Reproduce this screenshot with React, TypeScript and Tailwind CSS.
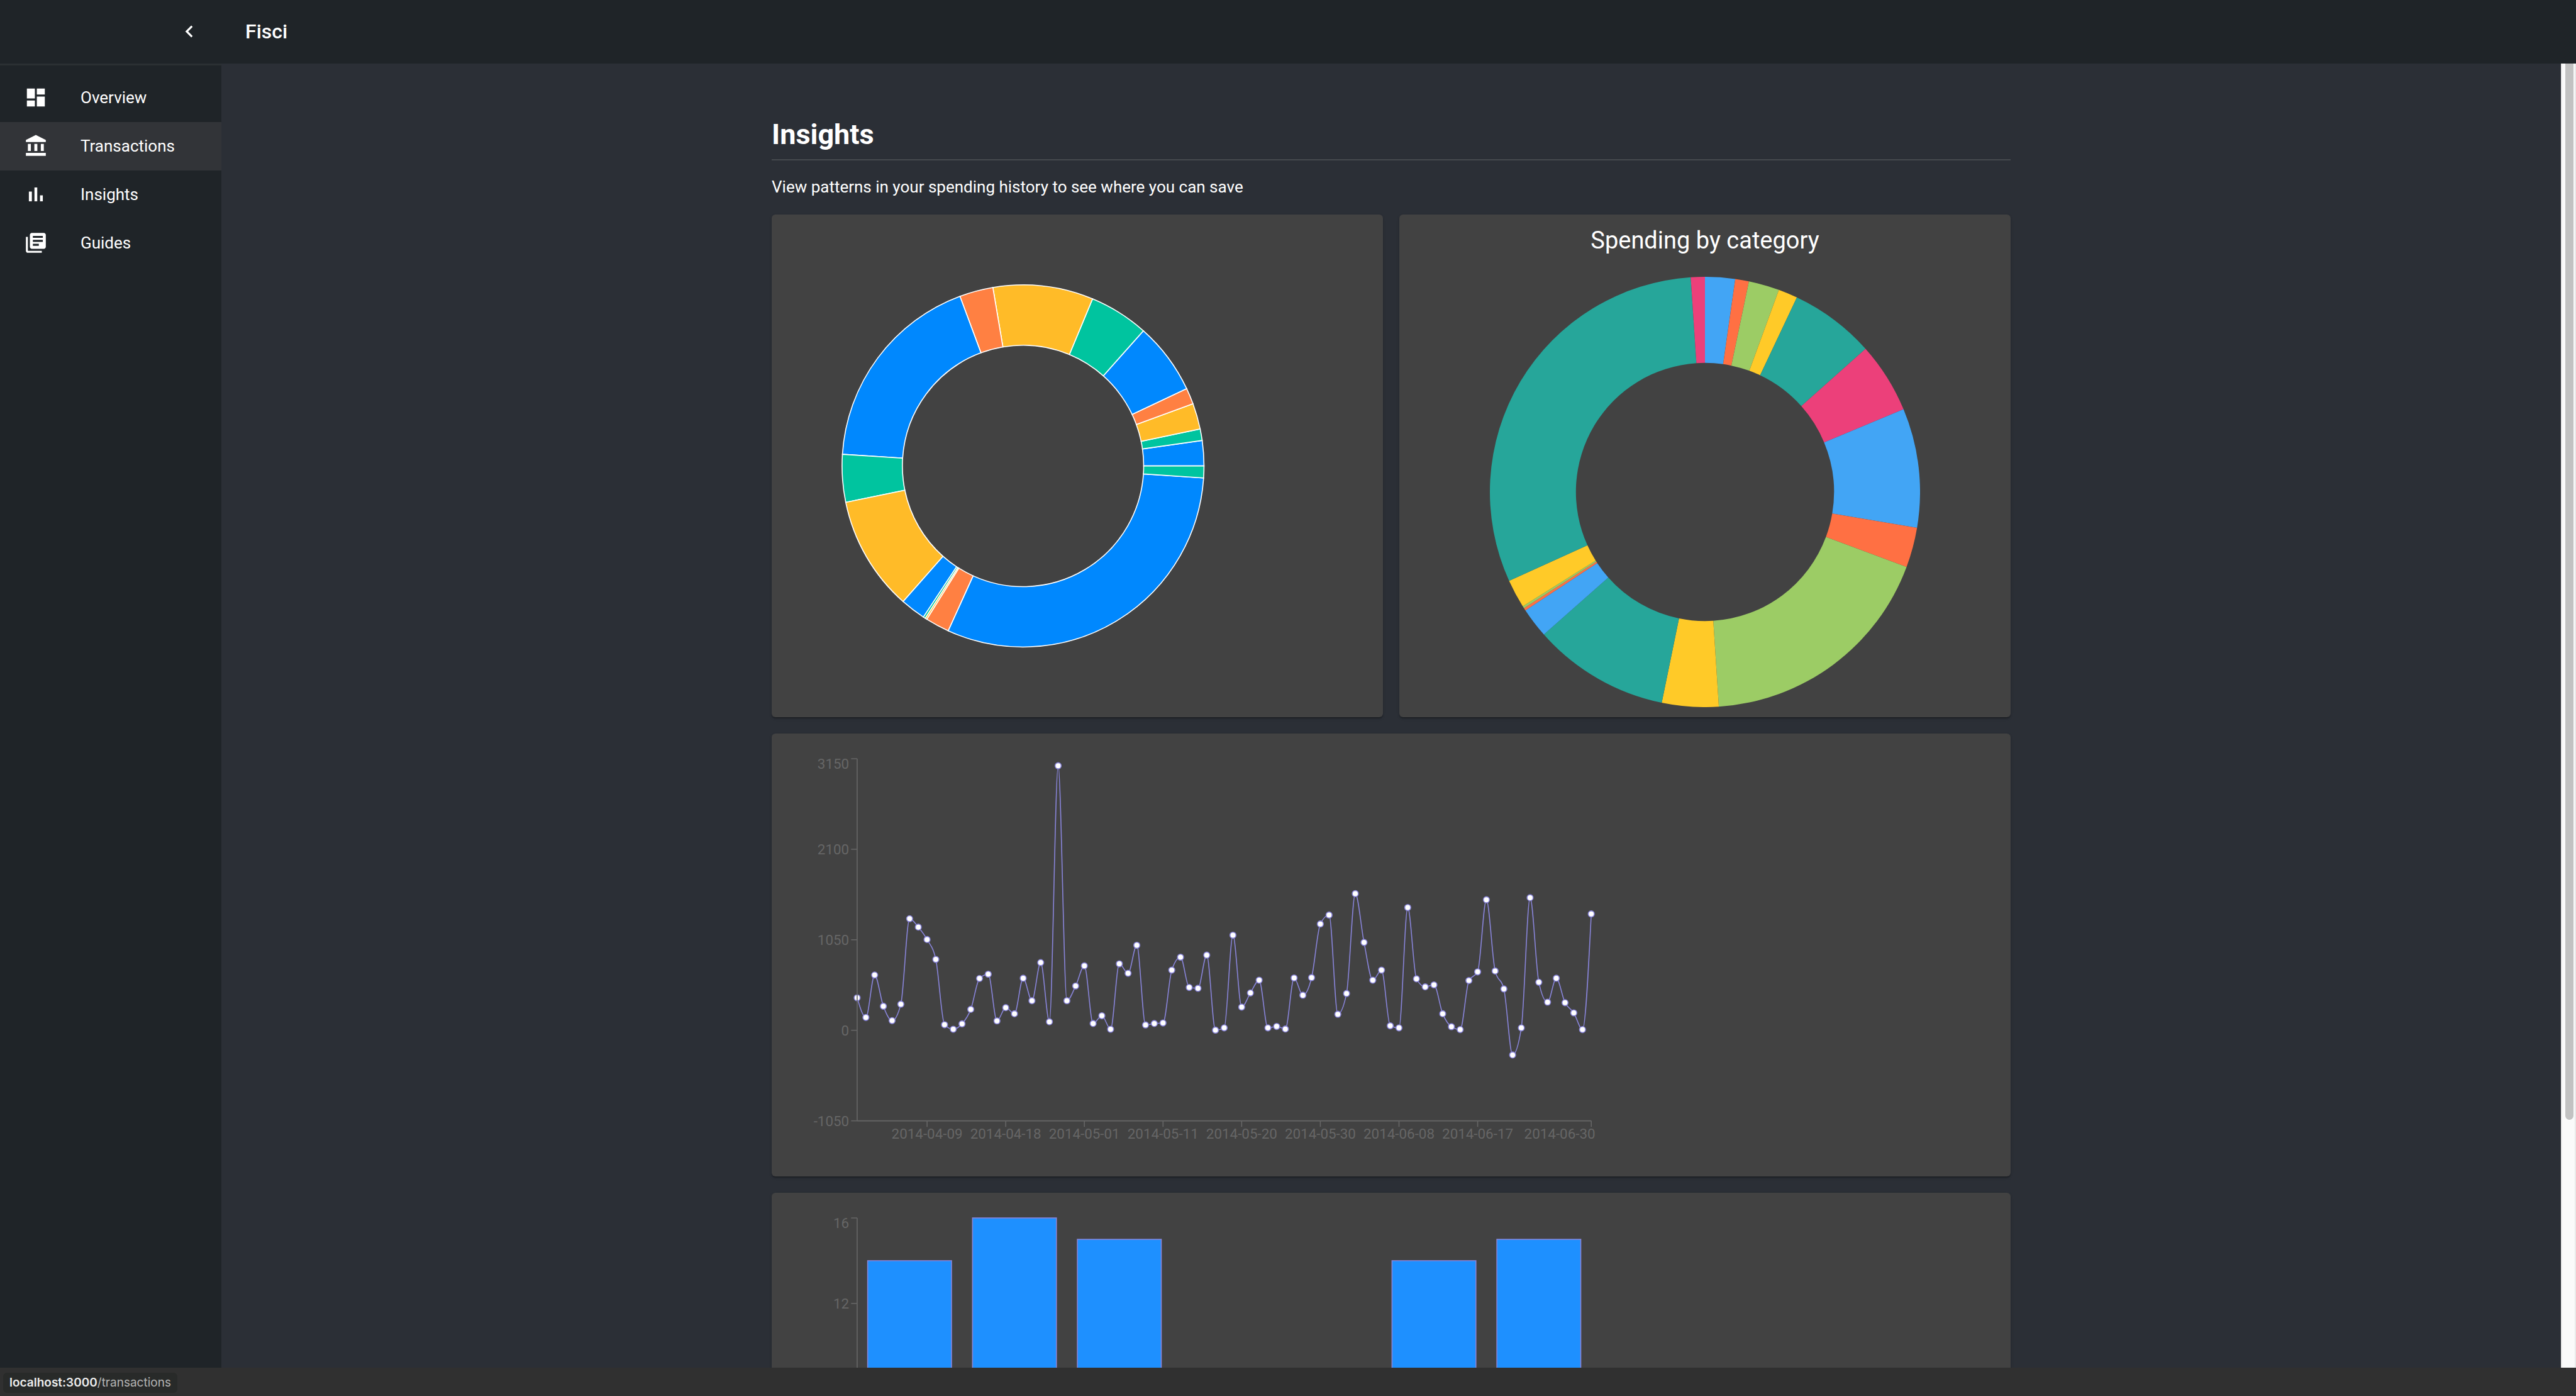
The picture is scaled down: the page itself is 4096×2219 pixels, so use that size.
import React from 'react';

interface Slice {
  to: number; // end of the slice, in degrees
  warm: string;
  soft: string;
}

// `warm` is used by the outlined donut, `soft` by the plain one
const slices: Slice[] = [
  { to: 8.1, warm: '#0088FE', soft: '#42A5F5' },
  { to: 11.8, warm: '#00C49F', soft: '#FF7043' },
  { to: 20.1, warm: '#FFBB28', soft: '#9CCC65' },
  { to: 25.3, warm: '#FF8042', soft: '#FFCA28' },
  { to: 48.3, warm: '#0088FE', soft: '#26A69A' },
  { to: 67.4, warm: '#00C49F', soft: '#EC407A' },
  { to: 99.6, warm: '#FFBB28', soft: '#42A5F5' },
  { to: 110.4, warm: '#FF8042', soft: '#FF7043' },
  { to: 176.3, warm: '#0088FE', soft: '#9CCC65' },
  { to: 191.6, warm: '#00C49F', soft: '#FFCA28' },
  { to: 228.5, warm: '#FFBB28', soft: '#26A69A' },
  { to: 236.6, warm: '#0088FE', soft: '#42A5F5' },
  { to: 237.3, warm: '#00C49F', soft: '#FF7043' },
  { to: 237.9, warm: '#FFBB28', soft: '#9CCC65' },
  { to: 245.6, warm: '#FF8042', soft: '#FFCA28' },
  { to: 356.2, warm: '#0088FE', soft: '#26A69A' },
  { to: 360, warm: '#00C49F', soft: '#EC407A' },
];

const daily = [
  377, 149, 641, 279, 112, 303, 1294, 1197, 1053, 822, 65, 12, 75, 243, 601, 651, 109, 263, 192, 604, 343, 785,
  99, 3068, 343, 514, 748, 79, 169, 12, 771, 661, 986, 62, 79, 85, 698, 848, 497, 487, 872, 2, 28, 1103, 269,
  433, 581, 28, 45, 15, 607, 407, 611, 1233, 1337, 186, 427, 1585, 1019, 581, 698, 52, 28, 1424, 597, 504, 527,
  192, 42, 8, 577, 678, 1514, 688, 480, -286, 28, 1538, 557, 326, 604, 320, 202, 8, 1350,
];

const dateTicks = [
  { index: 8, label: '2014-04-09' },
  { index: 17, label: '2014-04-18' },
  { index: 26, label: '2014-05-01' },
  { index: 35, label: '2014-05-11' },
  { index: 44, label: '2014-05-20' },
  { index: 53, label: '2014-05-30' },
  { index: 62, label: '2014-06-08' },
  { index: 71, label: '2014-06-17' },
  { index: 84, label: '2014-06-30' },
];

const weekly = [14, 16, 15, 0, 0, 14, 15];

const navItems = [
  {
    label: 'Overview',
    href: '#overview',
    icon: 'M3 13h8V3H3v10zm0 8h8v-6H3v6zm10 0h8V11h-8v10zm0-18v6h8V3h-8z',
  },
  {
    label: 'Transactions',
    href: '#transactions',
    active: true,
    icon: 'M4 10h3v7H4zM10.5 10h3v7h-3zM2 19h20v3H2zM17 10h3v7h-3zM12 1L2 6v2h20V6z',
  },
  {
    label: 'Insights',
    href: '#insights',
    icon: 'M5 9.2h3V19H5zM10.6 5h2.8v14h-2.8zm5.6 8H19v6h-2.8z',
  },
  {
    label: 'Guides',
    href: '#guides',
    icon: 'M4 6H2v14c0 1.1.9 2 2 2h14v-2H4V6zm16-4H8c-1.1 0-2 .9-2 2v12c0 1.1.9 2 2 2h12c1.1 0 2-.9 2-2V4c0-1.1-.9-2-2-2zm-1 9H9V9h10v2zm-4 4H9v-2h6v2zm4-8H9V5h10v2z',
  },
];

const LEFT = 85;
const PLOT_WIDTH = 730;

const ringPath = (cx: number, cy: number, outer: number, inner: number, from: number, to: number, clockwise: boolean) => {
  // clockwise rings start at twelve o'clock, the others at three o'clock
  const at = (r: number, deg: number) => {
    const a = ((clockwise ? deg - 90 : -deg) * Math.PI) / 180;
    return `${cx + r * Math.cos(a)} ${cy + r * Math.sin(a)}`;
  };
  const sweep = clockwise ? 1 : 0;
  return [
    `M${at(outer, from)}`,
    `A${outer} ${outer} 0 0 ${sweep} ${at(outer, to)}`,
    `L${at(inner, to)}`,
    `A${inner} ${inner} 0 0 ${1 - sweep} ${at(inner, from)}`,
    'Z',
  ].join('');
};

// cubic curve that never overshoots its points
const monotonePath = (pts: number[][]) => {
  const n = pts.length;
  const slope = (i: number) => (pts[i + 1][1] - pts[i][1]) / (pts[i + 1][0] - pts[i][0]);
  const tangents = pts.map((_, i) => {
    if (i === 0 || i === n - 1) return 0;
    const s0 = slope(i - 1);
    const s1 = slope(i);
    const p = (s0 + s1) / 2;
    return (Math.sign(s0) + Math.sign(s1)) * Math.min(Math.abs(s0), Math.abs(s1), 0.5 * Math.abs(p));
  });
  tangents[0] = (3 * slope(0) - tangents[1]) / 2;
  tangents[n - 1] = (3 * slope(n - 2) - tangents[n - 2]) / 2;

  let d = `M${pts[0][0]} ${pts[0][1]}`;
  for (let i = 1; i < n; i++) {
    const [x0, y0] = pts[i - 1];
    const [x1, y1] = pts[i];
    const dx = (x1 - x0) / 3;
    d += `C${x0 + dx} ${y0 + dx * tangents[i - 1]} ${x1 - dx} ${y1 - dx * tangents[i]} ${x1} ${y1}`;
  }
  return d;
};

const Card: React.FC<{ className?: string; children: React.ReactNode }> = ({ className = '', children }) => (
  <section
    className={`overflow-hidden rounded-md bg-[#424242] shadow-[0_3px_2px_-2px_rgba(0,0,0,0.2),0_2px_2px_0_rgba(0,0,0,0.14),0_2px_5px_0_rgba(0,0,0,0.12)] ${className}`}
  >
    {children}
  </section>
);

const OutlinedDonut: React.FC = () => (
  <svg viewBox="0 0 608 500" className="w-full" role="img" aria-label="Spending split">
    {slices.map((s, i) => (
      <path
        key={s.to}
        d={ringPath(250, 250, 180, 120, i ? slices[i - 1].to : 0, s.to, false)}
        fill={s.warm}
        stroke="#fff"
      />
    ))}
  </svg>
);

const CategoryDonut: React.FC = () => (
  <svg viewBox="0 0 100 100" className="mx-auto mt-8 w-[684px]" role="img" aria-label="Spending by category">
    {slices.map((s, i) => (
      <path key={s.to} d={ringPath(50, 50, 50, 30, i ? slices[i - 1].to : 0, s.to, true)} fill={s.soft} />
    ))}
  </svg>
);

const YTick: React.FC<{ y: number; label: number; top?: boolean }> = ({ y, label, top }) => (
  <g>
    <line x1={LEFT - 6} x2={LEFT} y1={y} y2={y} stroke="#666" />
    <text x={LEFT - 8} y={y + (top ? 10 : 5)} textAnchor="end" fontSize="14" fill="#666">
      {label}
    </text>
  </g>
);

const DailyChart: React.FC = () => {
  const toX = (i: number) => LEFT + (i * PLOT_WIDTH) / (daily.length - 1);
  const toY = (v: number) => 25 + ((3150 - v) * 360) / 4200;
  const points = daily.map((v, i) => [toX(i), toY(v)]);

  return (
    <svg viewBox="0 0 1232 440" className="w-full" role="img" aria-label="Spending by day">
      <path d={monotonePath(points)} fill="none" stroke="#8884d8" />
      {points.map(([x, y]) => (
        <circle key={x} cx={x} cy={y} r="3" fill="#fff" stroke="#8884d8" />
      ))}
      <line x1={LEFT} x2={LEFT} y1="25" y2="385" stroke="#666" />
      <line x1={LEFT} x2={LEFT + PLOT_WIDTH} y1="385" y2="385" stroke="#666" />
      {[3150, 2100, 1050, 0, -1050].map((v) => (
        <YTick key={v} y={toY(v)} label={v} top={v === 3150} />
      ))}
      {dateTicks.map((t) => {
        const last = t.index === daily.length - 1;
        return (
          <g key={t.label}>
            <line x1={toX(t.index)} x2={toX(t.index)} y1="385" y2="391" stroke="#666" />
            <text
              x={last ? toX(t.index) + 4 : toX(t.index)}
              y="403"
              textAnchor={last ? 'end' : 'middle'}
              fontSize="14"
              fill="#666"
            >
              {t.label}
            </text>
          </g>
        );
      })}
    </svg>
  );
};

const WeekdayChart: React.FC = () => {
  const band = PLOT_WIDTH / weekly.length;
  const unit = 340 / 16;

  return (
    <svg viewBox="0 0 1232 440" className="w-full" role="img" aria-label="Purchases by weekday">
      <line x1={LEFT} x2={LEFT} y1="25" y2="365" stroke="#666" />
      <YTick y={25} label={16} top />
      <YTick y={110} label={12} />
      {weekly.map((v, i) => (
        <rect
          key={i}
          x={LEFT + band * (i + 0.1)}
          y={365 - v * unit}
          width={band * 0.8}
          height={v * unit}
          fill="#1e90ff"
          stroke="#8884d8"
        />
      ))}
    </svg>
  );
};

const App: React.FC = () => {
  return (
    <div className="flex h-screen flex-col bg-[#303030] font-['Roboto',sans-serif] text-white">
      <header className="flex h-[101px] shrink-0 items-center bg-[#1f2428] pb-[2px]">
        <div className="flex w-[352px] justify-end pr-3">
          <button type="button" aria-label="Collapse menu" className="flex size-[78px] items-center justify-center">
            <svg viewBox="0 0 24 24" className="size-[38px]" fill="currentColor">
              <path d="M15.41 7.41L14 6l-6 6 6 6 1.41-1.41L10.83 12z" />
            </svg>
          </button>
        </div>
        <h1 className="pl-[38px] text-[32px] leading-[38px] font-medium">Fisci</h1>
      </header>

      <div className="flex min-h-0 flex-1">
        <nav className="w-[352px] shrink-0 border-t-3 border-[#2b3033] bg-[#1f2428] pt-[13px]">
          {navItems.map((item) => (
            <a
              key={item.label}
              href={item.href}
              className={`flex h-[77px] items-center gap-[52px] pb-[2px] pl-[38px] text-[26px] leading-[38px] ${
                item.active ? 'bg-[#323438]' : ''
              }`}
            >
              <svg viewBox="0 0 24 24" className="size-[38px]" fill="currentColor" aria-hidden="true">
                <path d={item.icon} />
              </svg>
              {item.label}
            </a>
          ))}
        </nav>

        <main className="min-w-0 flex-1 overflow-hidden bg-[#2b2f36] px-[38px]">
          <div className="mx-auto max-w-[1970px] pt-[86px]">
            <h2 className="border-b-2 border-[#464a4e] pb-3 text-[45px] leading-[54px] font-bold">Insights</h2>
            <p className="mt-[23px] text-[26px] leading-[38px]">
              View patterns in your spending history to see where you can save
            </p>

            <div className="mt-[25px] grid grid-cols-2 gap-[26px]">
              <Card className="h-[799px]">
                <OutlinedDonut />
              </Card>
              <Card className="h-[799px] pt-[15px]">
                <h3 className="text-center text-[38px] leading-[52px]">Spending by category</h3>
                <CategoryDonut />
              </Card>
              <Card className="col-span-2 h-[704px]">
                <DailyChart />
              </Card>
              <Card className="col-span-2 h-[704px]">
                <WeekdayChart />
              </Card>
            </div>
          </div>
        </main>

        <div className="w-6 shrink-0 overflow-hidden border-x-2 border-[#e9e9e9] bg-[#fafafa] px-1">
          <div className="ml-px h-[81%] w-[13px] rounded-b-full bg-[#c2c2c2]" />
        </div>
      </div>

      <footer className="flex h-[45px] shrink-0 items-center px-[5px] pt-[3px]">
        <p className="rounded-md bg-[#282a29] px-[10px] font-['Inter',sans-serif] text-[19px] leading-8 text-[#b4b4b4]">
          <span className="font-semibold text-[#ededed]">localhost:3000</span>/transactions
        </p>
      </footer>
    </div>
  );
};

export default App;
